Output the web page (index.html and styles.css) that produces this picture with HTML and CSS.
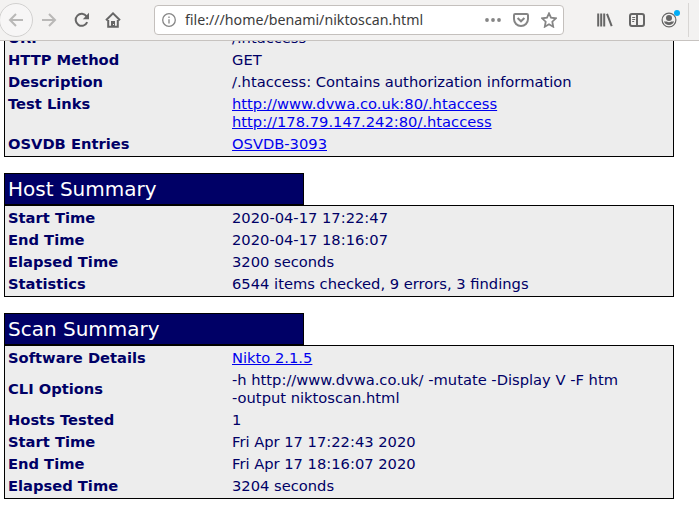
FILE: index.html
```
<!DOCTYPE html>
<html lang="en">
<head>
<meta charset="utf-8">
<title>Nikto Scan</title>
<link rel="stylesheet" href="styles.css">
</head>
<body>
<header class="toolbar">
  <span class="back"><svg width="16" height="16" viewBox="0 0 16 16"><path d="M15 8H2M8 2L2 8l6 6"/></svg></span>
  <svg class="forward" width="16" height="16" viewBox="0 0 16 16"><path d="M1 8h13M8 2l6 6-6 6"/></svg>
  <svg class="reload" width="16" height="16" viewBox="0 0 16 16"><path class="line" d="M13.2 10.2A6 6 0 1 1 12.6 4.4"/><path class="solid" d="M15 .8v6.4H8.8z"/></svg>
  <svg class="home" width="16" height="16" viewBox="0 0 16 16"><path class="line" d="M1 8.3L8 1.4l7 6.9M3.2 8v6.8h9.6V8"/><path class="solid" d="M6 9h4v6H6z"/><path class="knob" d="M8 12h1v1H8z"/></svg>
  <div class="urlbar">
    <svg class="info" width="14" height="14" viewBox="0 0 14 14"><circle cx="7" cy="7" r="6.3"/><path d="M7 6.2v4.3M7 3.4v1.5"/></svg>
    <span class="url">file:///home/benami/niktoscan.html</span>
    <svg class="dots" width="16" height="4" viewBox="0 0 16 4"><circle cx="2" cy="2" r="1.9"/><circle cx="8" cy="2" r="1.9"/><circle cx="14" cy="2" r="1.9"/></svg>
    <svg class="pocket" width="16" height="14" viewBox="0 0 16 14"><path d="M2.2 1h11.6c.7 0 1.2.5 1.2 1.2V6A7 7 0 0 1 1 6V2.200C1 1.500 1.500 1 2.200 1zM4.600 5L8 8.300 11.400 5"/></svg>
    <svg class="star" width="16" height="16" viewBox="0 0 16 16"><path d="M8 1.400l2 4.300 4.900.6-3.600 3.400.9 5L8 12.300l-4.200 2.400.9-5L1.100 6.300 6 5.700z"/></svg>
  </div>
  <svg class="library" width="16" height="14" viewBox="0 0 16 14"><path d="M1.200 .5v13M4.200 .5v13M7.200 .5v13M10 .8l4.700 12.400"/></svg>
  <svg class="sidebar" width="16" height="14" viewBox="0 0 16 14"><rect x="1" y="1" width="14" height="12" rx="2"/><path d="M8 1v12"/><path class="thin" d="M3.200 4.500h3M3.200 6.500h3M3.200 8.500h2"/></svg>
  <span class="account"><svg width="16" height="16" viewBox="0 0 16 16"><circle class="ring" cx="8" cy="8" r="6.900"/><circle cx="8" cy="6" r="3"/><path d="M3 9.200c1 .2 2 .3 2.700.2a4 4 0 0 0 4.600 0c.7.100 1.700 0 2.700-.2a5.200 5.200 0 0 1-10 0z"/></svg><i class="badge"></i></span>
  <span class="divider"></span>
</header>
<main class="page">
  <div class="report">
    <dl class="table">
      <dt>URI</dt><dd>/.htaccess</dd>
      <dt>HTTP Method</dt><dd>GET</dd>
      <dt>Description</dt><dd>/.htaccess: Contains authorization information</dd>
      <dt class="top">Test Links</dt><dd><a href="#">http://www.dvwa.co.uk:80/.htaccess</a><br><a href="#">http://178.79.147.242:80/.htaccess</a></dd>
      <dt>OSVDB Entries</dt><dd><a href="#">OSVDB-3093</a></dd>
    </dl>
    <section>
      <h2>Host Summary</h2>
      <dl class="table">
        <dt>Start Time</dt><dd>2020-04-17 17:22:47</dd>
        <dt>End Time</dt><dd>2020-04-17 18:16:07</dd>
        <dt>Elapsed Time</dt><dd>3200 seconds</dd>
        <dt>Statistics</dt><dd>6544 items checked, 9 errors, 3 findings</dd>
      </dl>
    </section>
    <section>
      <h2>Scan Summary</h2>
      <dl class="table">
        <dt>Software Details</dt><dd><a href="#">Nikto 2.1.5</a></dd>
        <dt>CLI Options</dt><dd>-h http://www.dvwa.co.uk/ -mutate -Display V -F htm<br>-output niktoscan.html</dd>
        <dt>Hosts Tested</dt><dd>1</dd>
        <dt>Start Time</dt><dd>Fri Apr 17 17:22:43 2020</dd>
        <dt>End Time</dt><dd>Fri Apr 17 18:16:07 2020</dd>
        <dt>Elapsed Time</dt><dd>3204 seconds</dd>
      </dl>
    </section>
  </div>
</main>
</body>
</html>
```
FILE: styles.css
```
* { box-sizing: border-box; }
body {
  margin: 0;
  height: 510px;
  overflow: hidden;
  display: flex;
  flex-direction: column;
  background: #fff;
  font-family: "DejaVu Sans", Verdana, sans-serif;
}
svg { display: block; flex: none; fill: none; stroke: #666; stroke-width: 2; }

.toolbar {
  flex: none;
  display: flex;
  align-items: center;
  height: 41px;
  background: #f3f2f1;
  border-bottom: 1px solid #c7c3c0;
}
.back {
  flex: none;
  width: 34px;
  height: 34px;
  margin-left: -1px;
  display: flex;
  align-items: center;
  justify-content: center;
  border: 1px solid #d2d1d0;
  border-radius: 50%;
  background: #f7f6f6;
}
.back svg, .forward { stroke: #b9b8b7; }
.forward { margin-left: 8px; }
.reload { margin-left: 17px; }
.home { margin-left: 15px; }
.solid { fill: #666; stroke: none; }
.knob { fill: #eee; stroke: none; }

.urlbar {
  flex: none;
  display: flex;
  align-items: center;
  width: 410px;
  height: 30px;
  margin-left: 33px;
  padding: 0 6px 0 7px;
  border: 1px solid #c4c0bd;
  border-radius: 4px;
  background: #fff;
}
.info { stroke: #868686; stroke-width: 1.3; }
.url {
  width: 300px;
  margin-left: 9px;
  font: 14.2px/20px "Noto Sans", sans-serif;
  color: #3c3c3c;
  white-space: nowrap;
}
.dots { fill: #858585; stroke: none; }
.pocket { margin-left: 12px; stroke: #858585; }
.star { margin-left: 12px; stroke: #858585; stroke-width: 1.8; }
.library { margin-left: 33px; }
.sidebar { margin-left: 16px; }
.thin { stroke-width: 1; }
.account { position: relative; margin-left: 16px; }
.account svg { fill: #666; stroke: none; }
.account .ring { fill: none; stroke: #666; stroke-width: 1.2; }
.badge {
  position: absolute;
  top: -2px;
  right: -3px;
  width: 6px;
  height: 6px;
  border-radius: 50%;
  background: #00adf6;
}
.divider { width: 1px; height: 34px; margin-left: 11px; background: #d8d6d4; }

.page { flex: 1; min-height: 0; overflow: hidden; }
.report { width: 670px; margin: -16px 0 0 4px; color: #006; }
section { margin-top: 16px; }
h2 {
  width: 300px;
  height: 32px;
  margin: 0;
  padding-left: 3px;
  border: 1px solid #000;
  background: #006;
  color: #fff;
  font-size: 20px;
  font-weight: normal;
  line-height: 30px;
}
.table {
  display: grid;
  grid-template-columns: 224px 1fr;
  align-items: center;
  margin: 0;
  padding: 1px;
  border: 1px solid #000;
  background: #ededed;
  font-size: 14.7px;
  line-height: 18px;
}
dt, dd { margin: 0; padding: 2px; }
dt { font-weight: bold; }
.top { align-self: start; }
a { color: #00e; }
```
